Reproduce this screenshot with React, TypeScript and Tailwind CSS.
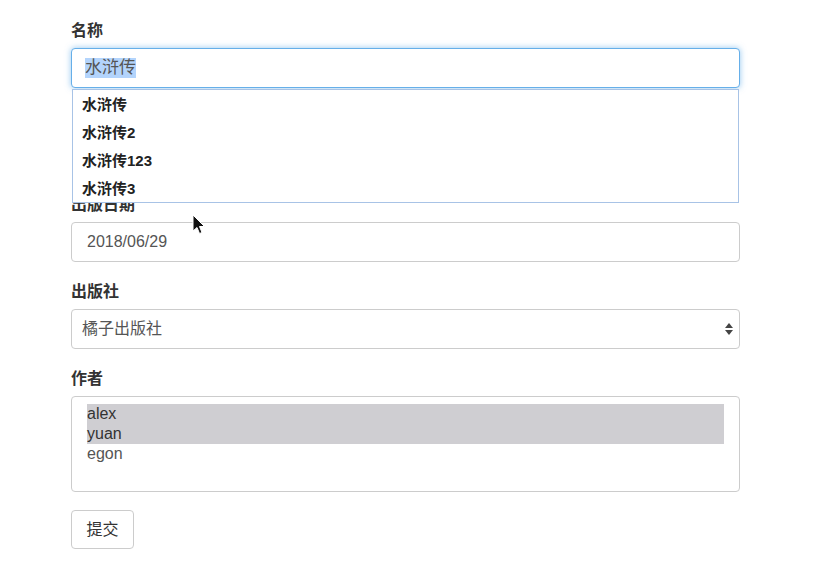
import React from "react";

const font = { fontFamily: '"Liberation Sans", "Noto Sans CJK SC", sans-serif' };

function Label({ children, className = "" }: { children: React.ReactNode; className?: string }) {
  return (
    <div className={`h-[20px] leading-[20px] text-[16px] font-bold text-[#333] mb-[7px] ${className}`}>
      {children}
    </div>
  );
}

export default function App() {
  const suggestions = ["水浒传", "水浒传2", "水浒传123", "水浒传3"];
  return (
    <div className="w-[826px] h-[573px] bg-white relative overflow-hidden" style={font}>
      <div className="pl-[71px] pt-[21px] w-[740px] flex flex-col">
        {/* 名称 */}
        <Label>名称</Label>
        <div className="relative z-10">
          <div className="h-[40px] rounded-[4px] border border-[#66afe9] shadow-[0_0_6px_rgba(102,175,233,0.7)] flex items-center pl-[13px] bg-white">
            <span className="bg-[#b3d4fc] text-[#555] text-[17px] leading-[20px]">水浒传</span>
          </div>
          <ul className="absolute left-[1px] right-[1px] top-[41px] h-[114px] bg-white border border-[#a8c3e6] pt-[1px]">
            {suggestions.map((s) => (
              <li key={s} className="h-[28px] leading-[28px] pl-[9px] text-[15px] font-bold text-[#222]">
                {s}
              </li>
            ))}
          </ul>
        </div>

        {/* 出版日期 */}
        <Label className="mt-[107px]">出版日期</Label>
        <div className="h-[40px] rounded-[4px] border border-[#ccc] flex items-center pl-[15px] text-[16px] text-[#555]">
          2018/06/29
        </div>

        {/* 出版社 */}
        <Label className="mt-[20px]">出版社</Label>
        <div className="h-[40px] rounded-[4px] border border-[#ccc] flex items-center justify-between pl-[10px] pr-[5px] text-[16px] text-[#555]">
          <span>橘子出版社</span>
          <svg width="10" height="16" viewBox="0 0 10 16">
            <path d="M5 2 L9 7 L1 7 Z" fill="#444" />
            <path d="M5 14 L9 9 L1 9 Z" fill="#444" />
          </svg>
        </div>

        {/* 作者 */}
        <Label className="mt-[20px]">作者</Label>
        <div className="h-[96px] rounded-[4px] border border-[#ccc] pt-[7px] px-[15px] text-[16px] leading-[20px] text-[#333]">
          <div className="bg-[#cfced2]">alex</div>
          <div className="bg-[#cfced2]">yuan</div>
          <div className="text-[#555]">egon</div>
        </div>

        <div className="mt-[18px]">
          <button className="h-[39px] w-[63px] rounded-[4px] border border-[#ccc] bg-white text-[16px] text-[#333]">
            提交
          </button>
        </div>
      </div>

      {/* mouse cursor */}
      <svg className="absolute left-[192px] top-[214px] z-20" width="14" height="22" viewBox="0 0 14 22">
        <path d="M1 1 L1 17 L5 13.5 L7.5 19.5 L10 18.5 L7.5 12.5 L12.5 12.5 Z" fill="#111" stroke="#fff" strokeWidth="1" />
      </svg>
    </div>
  );
}
